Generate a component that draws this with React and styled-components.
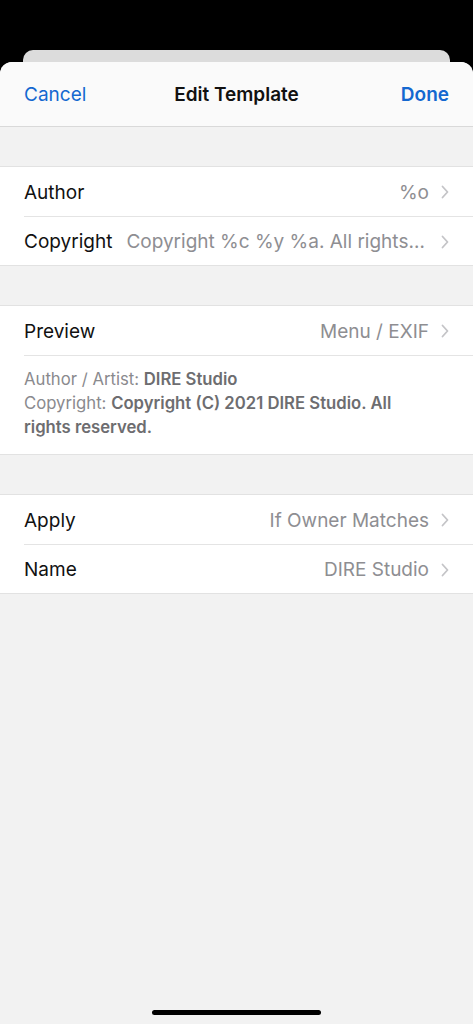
import React from 'react'
import styled, { createGlobalStyle } from 'styled-components'

const GlobalStyle = createGlobalStyle`
    html, body {
        margin: 0;
        padding: 0;
        background: #000;
    }
    body {
        font-family: Inter, "Noto Sans", "Liberation Sans", sans-serif;
        -webkit-font-smoothing: antialiased;
    }
`

const groups = [
    [
        { label: 'Author', value: '%o' },
        { label: 'Copyright', value: 'Copyright %c %y %a. All rights reserved.' },
    ],
    [
        { label: 'Preview', value: 'Menu / EXIF', preview: true },
    ],
    [
        { label: 'Apply', value: 'If Owner Matches' },
        { label: 'Name', value: 'DIRE Studio' },
    ],
]

const Chevron = () => (
    <ChevronSvg viewBox="0 0 8 14" width="8" height="14">
        <path d="M1.5 1.5 L6.5 7 L1.5 12.5" fill="none" stroke="#c4c4c7" strokeWidth="1.8" strokeLinecap="round" strokeLinejoin="round" />
    </ChevronSvg>
)

const App = () => {
    return (
        <Screen>
            <GlobalStyle />
            <BackCard />
            <Sheet>
                <Header>
                    <NavButton>Cancel</NavButton>
                    <Title>Edit Template</Title>
                    <NavButton bold align="right">Done</NavButton>
                </Header>
                {groups.map((rows, gi) => (
                    <Group key={gi}>
                        {rows.map((row) => (
                            <React.Fragment key={row.label}>
                                <Row>
                                    <Label>{row.label}</Label>
                                    <Value>{row.value}</Value>
                                    <Chevron />
                                </Row>
                                {row.preview && (
                                    <PreviewText>
                                        <PreviewLine>
                                            Author / Artist: <b>DIRE Studio</b>
                                        </PreviewLine>
                                        <PreviewLine>
                                            Copyright: <b>Copyright (C) 2021 DIRE Studio. All rights reserved.</b>
                                        </PreviewLine>
                                    </PreviewText>
                                )}
                            </React.Fragment>
                        ))}
                    </Group>
                ))}
                <HomeIndicator />
            </Sheet>
        </Screen>
    )
}

export default App

const Screen = styled.div`
    min-height: 100vh;
    background: #000;
    padding-top: 50px;
    box-sizing: border-box;
    display: flex;
    flex-direction: column;
`

const BackCard = styled.div`
    height: 12px;
    margin: 0 23px;
    background: #dcdcdc;
    border-radius: 10px 10px 0 0;
`

const Sheet = styled.div`
    flex: 1;
    display: flex;
    flex-direction: column;
    background: #f2f2f2;
    border-radius: 12px 12px 0 0;
    overflow: hidden;
`

const Header = styled.div`
    height: 64px;
    flex-shrink: 0;
    display: grid;
    grid-template-columns: 1fr auto 1fr;
    align-items: center;
    padding: 0 24px;
    background: #fafafa;
    border-bottom: 1px solid #d9d9d9;
`

const NavButton = styled.div`
    font-size: 19px;
    color: #1468d0;
    font-weight: ${(p) => (p.bold ? 600 : 400)};
    text-align: ${(p) => p.align || 'left'};
`

const Title = styled.div`
    font-size: 19px;
    font-weight: 600;
    color: #111;
`

const Group = styled.div`
    margin-top: 39px;
    background: #fff;
    border-top: 1px solid #e2e2e2;
    border-bottom: 1px solid #e2e2e2;
    padding-left: 24px;

    & > * + * {
        border-top: 1px solid #e4e4e4;
    }
`

const Row = styled.div`
    height: 49px;
    display: flex;
    align-items: center;
    padding: 1px 24px 0 0;
    box-sizing: border-box;
    gap: 14px;
`

const Label = styled.div`
    font-size: 19px;
    color: #111;
    white-space: nowrap;
    flex-shrink: 0;
`

const Value = styled.div`
    flex: 1;
    min-width: 0;
    font-size: 19px;
    color: #8e8e92;
    text-align: right;
    white-space: nowrap;
    overflow: hidden;
    text-overflow: ellipsis;
`

const ChevronSvg = styled.svg`
    flex-shrink: 0;
    margin-left: -2px;
`

const PreviewText = styled.div`
    padding: 11px 40px 15px 0;
    font-size: 16.7px;
    line-height: 24px;
    color: #8a8a8e;

    b {
        font-weight: 600;
        color: #6d6d70;
    }
`

const PreviewLine = styled.div``

const HomeIndicator = styled.div`
    margin: auto auto 9px;
    width: 169px;
    height: 5px;
    border-radius: 3px;
    background: #000;
`
